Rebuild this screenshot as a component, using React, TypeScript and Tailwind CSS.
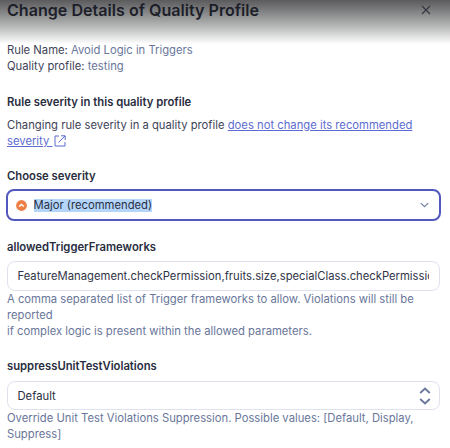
import React from "react";

function Heading({ children, className = "" }: { children: React.ReactNode; className?: string }) {
  return <h2 className={`whitespace-nowrap text-[11.27px] leading-4 font-semibold text-[#292d40] ${className}`}>{children}</h2>;
}

function Help({ lines }: { lines: string[] }) {
  return (
    <div className="whitespace-nowrap text-[11.25px] leading-4 text-[#69769a]">
      {lines.map((line) => (
        <p key={line}>{line}</p>
      ))}
    </div>
  );
}

export default function App() {
  return (
    <main className="h-[448px] w-[450px] overflow-hidden bg-white font-['Inter','Liberation_Sans',sans-serif] text-[11.25px] leading-4 text-[#3e4357]">
      <header className="flex h-[44px] items-start justify-between bg-linear-to-b from-[#5b5b5d] via-[#a6a7a7] to-white pr-[19px] pl-[7px]">
        <h1 className="whitespace-nowrap text-[16.1px] leading-5 font-semibold text-[#1c1e29]">Change Details of Quality Profile</h1>
        <svg className="mt-[5px] h-[10px] w-[10px]" viewBox="0 0 10 10" fill="none" stroke="#343743" strokeWidth="1.1">
          <path d="M1 1l8 8M9 1L1 9" />
        </svg>
      </header>

      <div className="pr-[10px] pl-[7px]">
        <div className="-mt-[2px] whitespace-nowrap">
          <p>Rule Name: <span className="text-[#69769a]">Avoid Logic in Triggers</span></p>
          <p>Quality profile: <span className="text-[#69769a]">testing</span></p>
        </div>

        <Heading className="mt-5">Rule severity in this quality profile</Heading>
        <p className="mt-[7px] whitespace-nowrap">
          Changing rule severity in a quality profile{" "}
          <a className="text-[#5d6cd0] underline">
            does not change its recommended
            <br />
            severity{"\u00a0"}
          </a>
          <svg className="ml-[2px] inline-block h-[12px] w-[12px] align-[-2px]" viewBox="0 0 12 12" fill="none" stroke="#5d6cd0" strokeWidth="1">
            <path d="M5 1H1v10h10V7M7 .8h4.2V5M11 1L4.5 7.5" />
          </svg>
        </p>

        <Heading className="mt-[19px]">Choose severity</Heading>
        <div className="-mx-px mt-[5px] flex h-8 items-center rounded-[8px] border-2 border-[#5258bd] pr-[10px] pl-[8px]">
          <svg className="h-[11px] w-[11px]" viewBox="0 0 11 11" fill="none">
            <circle cx="5.5" cy="5.5" r="5.4" fill="#ed8047" />
            <path d="M3.2 6.6l2.3-2.2 2.3 2.2" stroke="white" strokeWidth="1.4" />
          </svg>
          <span className="ml-[6.5px] bg-[#b4d5fa] leading-[13px] text-[#292f43]">Major (recommended)</span>
          <svg className="ml-auto h-[6px] w-[9px]" viewBox="0 0 9 6" fill="none" stroke="#7783a3" strokeWidth="1.3">
            <path d="M.8 1.1l3.7 3.6 3.7-3.6" />
          </svg>
        </div>

        <Heading className="mt-[18px]">allowedTriggerFrameworks</Heading>
        <div className="mt-[6px] flex h-[30px] items-center rounded-[8px] border border-[#dfe2ee] pr-[10px] pl-[9.5px]">
          <span className="overflow-hidden whitespace-nowrap text-[#303447]">
            FeatureManagement.checkPermission,fruits.size,specialClass.checkPermission
          </span>
        </div>
        <Help
          lines={[
            "A comma separated list of Trigger frameworks to allow. Violations will still be",
            "reported",
            "if complex logic is present within the allowed parameters.",
          ]}
        />

        <Heading className="mt-[19px]">suppressUnitTestViolations</Heading>
        <div className="mt-[7px] flex h-[29px] items-center justify-between rounded-[8px] border border-[#dfe2ee] pr-[8px] pl-[9.5px] text-[#292d40]">
          <span>Default</span>
          <svg className="h-[18px] w-[12px]" viewBox="0 0 12 18" fill="none" stroke="#69769a" strokeWidth="1.9">
            <path d="M1.2 6L6 1.5 10.8 6M1.2 12L6 16.5 10.8 12" />
          </svg>
        </div>
        <Help
          lines={[
            "Override Unit Test Violations Suppression. Possible values: [Default, Display,",
            "Suppress]",
          ]}
        />
      </div>
    </main>
  );
}
